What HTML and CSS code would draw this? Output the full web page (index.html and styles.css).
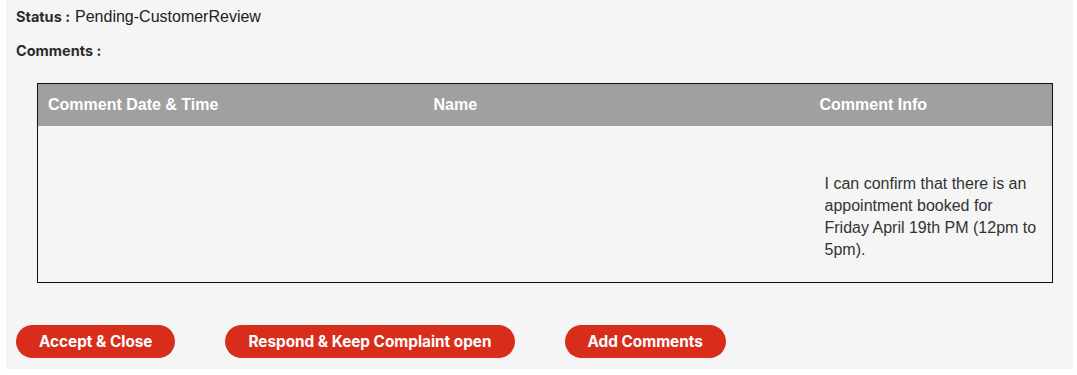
FILE: index.html
```html
<!DOCTYPE html>
<html lang="en">
<head>
  <meta charset="UTF-8">
  <title>Complaint Details</title>
  <link rel="stylesheet" href="styles.css">
</head>
<body>
  <div class="panel">
    <div class="field">
      <span class="label">Status :</span>
      <span class="value">Pending-CustomerReview</span>
    </div>
    <div class="field comments-label">
      <span class="label">Comments :</span>
    </div>

    <!-- comments table -->
    <table class="comments-table">
      <thead>
        <tr>
          <th class="col-date">Comment Date &amp; Time</th>
          <th class="col-name">Name</th>
          <th class="col-info">Comment Info</th>
        </tr>
      </thead>
      <tbody>
        <tr>
          <td></td>
          <td></td>
          <td class="info-cell">I can confirm that there is an appointment booked for Friday April 19th PM (12pm to 5pm).</td>
        </tr>
      </tbody>
    </table>

    <div class="actions">
      <button class="btn">Accept &amp; Close</button>
      <button class="btn">Respond &amp; Keep Complaint open</button>
      <button class="btn">Add Comments</button>
    </div>
  </div>
</body>
</html>
```

FILE: styles.css
```css
/* base */
* {
  box-sizing: border-box;
  margin: 0;
  padding: 0;
}

body {
  background-color: #fff;
  font-family: 'Liberation Sans', Arial, sans-serif;
  color: #222;
}

/* panel */
.panel {
  margin: 0 4px 0 6px;
  padding: 8px 20px 11px 10px;
  background-color: #f5f5f5;
}

.field {
  display: flex;
  align-items: baseline;
  gap: 5px;
  height: 20px;
}

.comments-label {
  margin-top: 14px;
}

.label {
  font-family: 'Inter', 'Liberation Sans', sans-serif;
  font-weight: 700;
  font-size: 14.5px;
  color: #2b2b2b;
}

.value {
  font-size: 16px;
  color: #222;
}

/* table */
.comments-table {
  width: 1016px;
  margin: 21px 0 0 21px;
  border: 1px solid #111;
  border-collapse: collapse;
  table-layout: fixed;
}

.comments-table th {
  height: 42px;
  padding: 0 10px;
  background-color: #a0a0a0;
  color: #fff;
  font-size: 16px;
  font-weight: 700;
  text-align: left;
  vertical-align: middle;
}

.col-date,
.col-name {
  width: 386px;
}

.comments-table td {
  height: 157px;
  vertical-align: top;
}

.info-cell {
  padding: 47px 14px 20px 15px;
  font-size: 16px;
  line-height: 22px;
  color: #333;
}

/* buttons */
.actions {
  display: flex;
  gap: 50px;
  margin-top: 42px;
}

.btn {
  height: 33px;
  padding: 0 23px;
  border: none;
  border-radius: 17px;
  background-color: #d92d1c;
  color: #fff;
  font-family: 'Inter', 'Liberation Sans', sans-serif;
  font-weight: 700;
  font-size: 15.3px;
  cursor: pointer;
}
```
